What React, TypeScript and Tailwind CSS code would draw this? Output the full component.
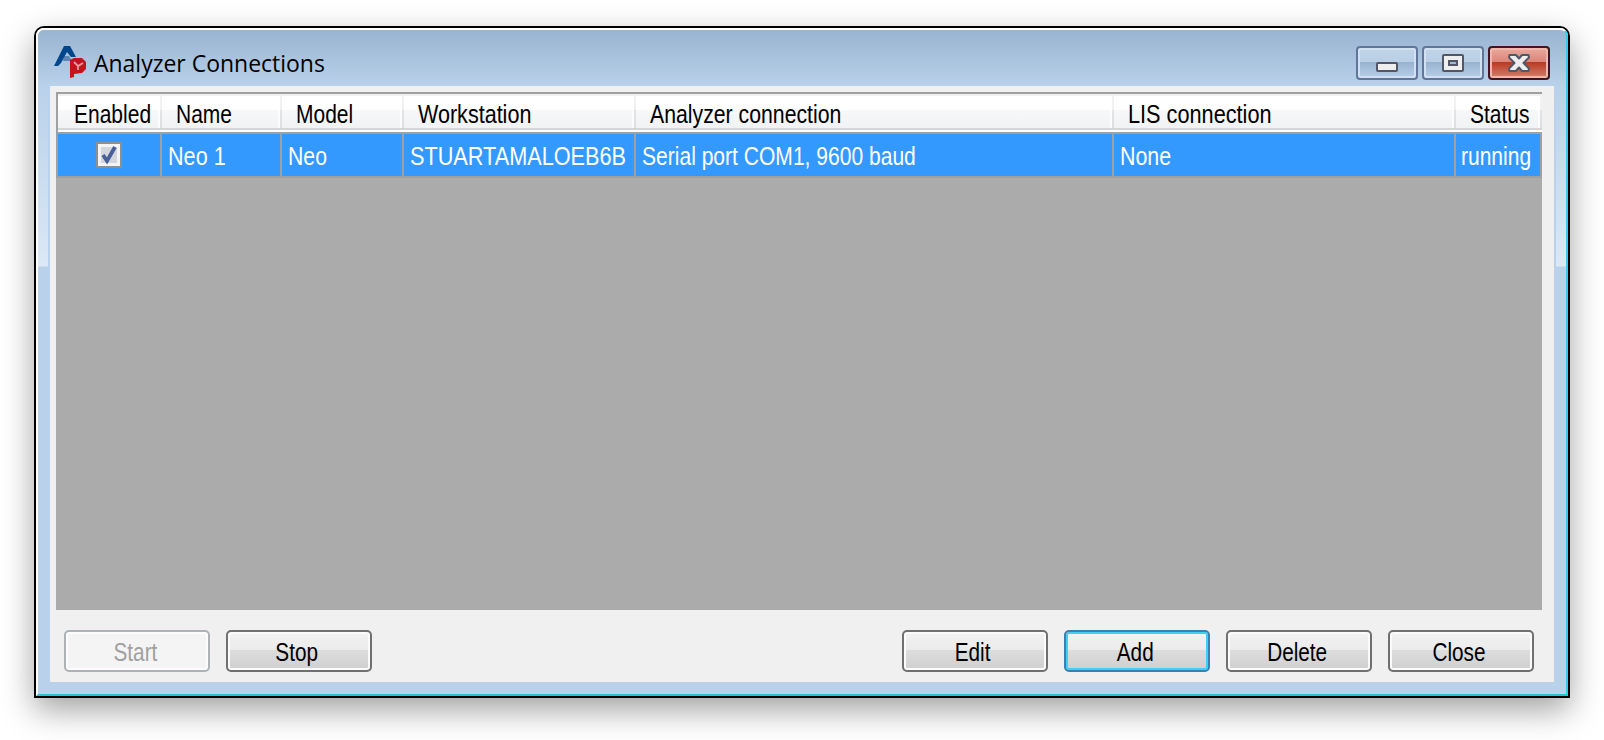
import type { ReactNode } from "react";

const ui = "inline-block whitespace-nowrap text-[25px] leading-[28px] font-['Liberation_Sans',sans-serif]";

function Header({ children, width, pad = "pl-[14px]" }: { children: ReactNode; width: string; pad?: string }) {
  return (
    <div className={`flex h-[34px] ${width} shrink-0 bg-[linear-gradient(#ffffff_0,#ffffff_14px,#f7f8fa_14px,#f1f2f4_32px,#d5d5d5_32px)]`}>
      <div className={`flex-1 pt-1 ${pad}`}>
        <span className={`${ui} h-7 w-0 text-black`}>{children}</span>
      </div>
      <div className="h-8 w-[2px] bg-white/70" />
      <div className="h-8 w-[2px] bg-[linear-gradient(#f2f2f2_0,#f0f0f0_14px,#e2e3e4_14px,#dedfe1_32px)]" />
    </div>
  );
}

function Cell({ children, width, pad = "pl-[6px]" }: { children: ReactNode; width: string; pad?: string }) {
  return (
    <div className={`flex h-[42px] ${width} ${pad} shrink-0 border-r-2 border-[#a0a0a0] bg-[#3399ff] pt-2`}>
      <span className={`${ui} h-7 w-0 text-white`}>{children}</span>
    </div>
  );
}

function Fit({ children, scale = "scale-x-[0.84]" }: { children: ReactNode; scale?: string }) {
  return <span className={`inline-block origin-left ${scale}`}>{children}</span>;
}

function Button({ label, kind = "normal" }: { label: string; kind?: "normal" | "disabled" | "focus" }) {
  const styles = {
    normal: "border-[#707070] text-black shadow-[inset_0_0_0_2px_#fbfbfb] bg-[linear-gradient(#f2f2f2_0,#ebebeb_48%,#dddddd_48%,#cfcfcf_100%)]",
    disabled: "border-[#adb2b5] text-[#a0a0a0] shadow-[inset_0_0_0_2px_#fcfcfc] bg-[#f4f4f4]",
    focus: "border-[#3c7fb1] text-black shadow-[inset_0_0_0_2px_#3fcff5] bg-[linear-gradient(#f2f2f2_0,#ebebeb_48%,#dddddd_48%,#cfcfcf_100%)]",
  };
  return (
    <button disabled={kind === "disabled"} className={`flex h-[42px] w-[146px] items-center justify-center rounded-[5px] border-2 pt-[2px] pr-1 ${styles[kind]}`}>
      <span className={`${ui} scale-x-[0.83]`}>{label}</span>
    </button>
  );
}

function CaptionButton({ children, close = false }: { children: ReactNode; close?: boolean }) {
  const tone = close
    ? "border-[#43141f] shadow-[inset_0_0_0_2px_#f0b5ab] bg-[linear-gradient(#e9a99f_0,#dd8377_48%,#b83a22_48%,#d4826f_100%)]"
    : "border-[#62759a] shadow-[inset_0_0_0_2px_#d2e1f1] bg-[linear-gradient(#c1d4e8_0,#b9cfe6_48%,#98b3d0_48%,#b8cfe8_100%)]";
  return <button className={`flex h-[34px] w-[62px] items-center justify-center rounded-[4px] border-2 ${tone}`}>{children}</button>;
}

function SideStrip({ right = false }: { right?: boolean }) {
  return (
    <div className={`flex w-3 shrink-0 ${right ? "flex-row-reverse" : ""}`}>
      <div className="w-[10px] bg-[linear-gradient(#b9d1ea_0,#dbe8f5_180px,#b9d1ea_181px)]" />
      <div className="w-[2px] bg-[#b9d1ea]" />
    </div>
  );
}

export default function App() {
  return (
    <div className="h-[740px] w-[1604px] overflow-hidden bg-white pt-[26px] pl-[34px]">
      <div className="h-[672px] w-[1536px] rounded-t-[10px] border-2 border-black shadow-[0_12px_32px_rgba(0,0,0,0.37)]">
        <div className="flex h-full flex-col rounded-t-[8px] border-2 border-t-white border-r-[#35cbee] border-b-[#20c5dd] border-l-white bg-[#b9d1ea]">
          <header className="flex h-14 shrink-0 rounded-t-[6px] bg-linear-to-b from-[#99b4d1] to-[#b9d1ea] pl-4">
            <svg className="mt-4 h-8 w-8" viewBox="0 0 32 32">
              <path d="M10 10h5l3 5h-9z" fill="#5c87b4" />
              <path d="M0 20 10 0h6l6 11h-5l-4-5-6 11-3 3z" fill="#00468a" />
              <path d="M16 14l4-2h8l4 4v7l-4 4-8 1v3l-4 1z" fill="#c4121f" />
              <path d="m20 16 4 4 5-3m-5 3v4" fill="none" stroke="#eb9aa0" strokeWidth="1.8" />
            </svg>
            <h1 className="mt-[17px] ml-2 w-[600px] origin-left scale-x-[0.957] font-['Open_Sans',sans-serif] text-[24px] leading-[32px] whitespace-nowrap text-black">Analyzer Connections</h1>
            <div className="mt-4 mr-[16px] ml-auto flex gap-1">
              <CaptionButton>
                <svg className="mt-2 h-[10px] w-[22px]" viewBox="0 0 22 10"><rect x="1" y="1" width="20" height="8" rx="1" fill="#eee" stroke="#535666" strokeWidth="2" /></svg>
              </CaptionButton>
              <CaptionButton>
                <svg className="h-[18px] w-[22px]" viewBox="0 0 22 18"><rect x="1" y="1" width="20" height="16" rx="1" fill="#eee" stroke="#535666" strokeWidth="2" /><rect x="7" y="7" width="8" height="4" fill="#a0b8d2" stroke="#535666" strokeWidth="2" /></svg>
              </CaptionButton>
              <CaptionButton close>
                <svg className="h-[18px] w-[22px]" viewBox="0 0 22 18"><path d="M1.5 1H8l3 3.5L14 1h6.500l.5 2.500L15.500 9l5.500 5.500-.5 2.500H14l-3-3.500L8 17H1.500L1 14.500 6.500 9 1 3.500z" fill="#eee" stroke="#535666" strokeWidth="2" strokeLinejoin="round" /></svg>
              </CaptionButton>
            </div>
          </header>
          <div className="flex h-[596px] shrink-0">
            <SideStrip />
            <main className="flex w-[1504px] flex-col bg-[#f0f0f0] pt-[6px] pl-[6px]">
              <section className="h-[518px] w-[1486px] border-t-2 border-[#a0a0a0] bg-[#ababab]">
                <div className="border-l-2 border-[#a0a0a0]">
                  <div className="flex h-[38px] border-t-2 border-b-2 border-t-[#f0f0f0] border-b-white bg-white">
                    <Header width="w-[104px]" pad="pl-4"><Fit>Enabled</Fit></Header>
                    <Header width="w-[120px]"><Fit>Name</Fit></Header>
                    <Header width="w-[122px]"><Fit>Model</Fit></Header>
                    <Header width="w-[232px]"><Fit scale="scale-x-[0.862]">Workstation</Fit></Header>
                    <Header width="w-[478px]"><Fit scale="scale-x-[0.85]">Analyzer connection</Fit></Header>
                    <Header width="w-[342px]"><Fit scale="scale-x-[0.868]">LIS connection</Fit></Header>
                    <Header width="w-[86px]"><Fit>Status</Fit></Header>
                  </div>
                  <div className="flex h-[46px] border-y-2 border-[#a0a0a0]">
                    <div className="flex w-[104px] items-center justify-center border-r-2 border-[#a0a0a0] bg-[#3399ff]">
                      <svg className="h-[26px] w-[26px]" viewBox="0 0 26 26">
                        <rect x="1" y="1" width="24" height="24" fill="#f4f4f4" stroke="#8e8f8f" strokeWidth="2" />
                        <rect x="5" y="5" width="16" height="16" fill="#d3d6dc" />
                        <path d="m7 13 4 6 8-14" fill="none" stroke="#4a5f97" strokeWidth="3.8" />
                      </svg>
                    </div>
                    <Cell width="w-[120px]"><Fit scale="scale-x-[0.865]">Neo 1</Fit></Cell>
                    <Cell width="w-[122px]"><Fit scale="scale-x-[0.85]">Neo</Fit></Cell>
                    <Cell width="w-[232px]"><Fit scale="scale-x-[0.867]">STUARTAMALOEB6B</Fit></Cell>
                    <Cell width="w-[478px]"><Fit scale="scale-x-[0.842]">Serial port COM1, 9600 baud</Fit></Cell>
                    <Cell width="w-[342px]"><Fit scale="scale-x-[0.855]">None</Fit></Cell>
                    <Cell width="w-[86px]" pad="pl-[5px]"><Fit>running</Fit></Cell>
                  </div>
                </div>
              </section>
              <footer className="mt-5 flex w-[1486px] justify-between px-2">
                <div className="flex gap-4">
                  <Button label="Start" kind="disabled" />
                  <Button label="Stop" />
                </div>
                <div className="flex gap-4">
                  <Button label="Edit" />
                  <Button label="Add" kind="focus" />
                  <Button label="Delete" />
                  <Button label="Close" />
                </div>
              </footer>
            </main>
            <SideStrip right />
          </div>
        </div>
      </div>
    </div>
  );
}
